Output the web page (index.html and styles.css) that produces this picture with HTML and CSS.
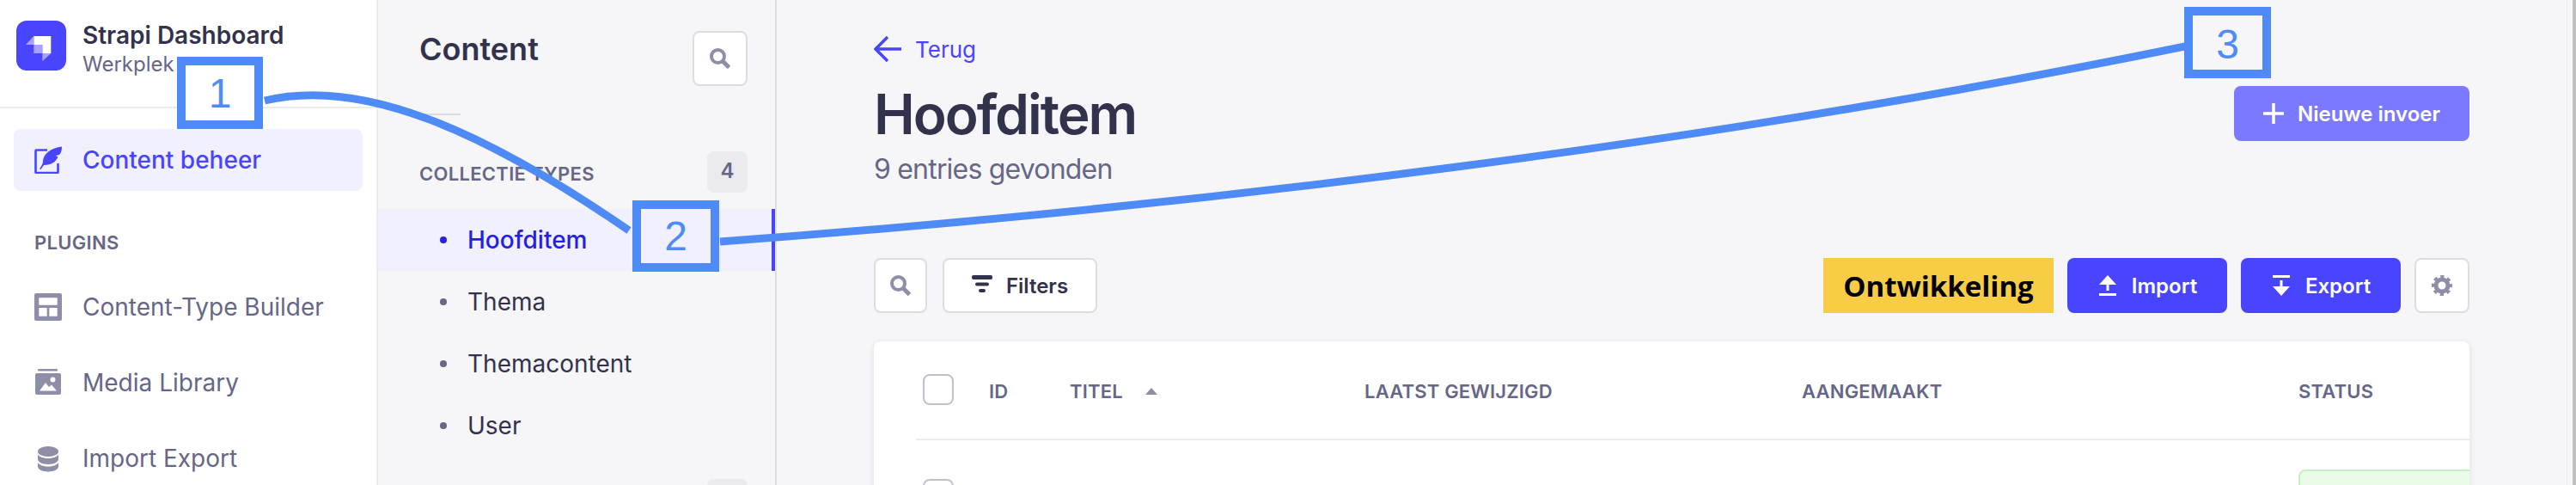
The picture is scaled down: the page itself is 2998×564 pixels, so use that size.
FILE: index.html
```html
<!DOCTYPE html>
<html lang="nl">
<head>
  <meta charset="UTF-8" />
  <title>Strapi Dashboard</title>
  <link rel="stylesheet" href="styles.css">
</head>
<body>

  <div class="app">
    <!-- Hoofdmenu links -->
    <nav class="mainnav">
      <div class="brand">
        <svg class="brand-logo" viewBox="0 0 58 58">
          <rect width="58" height="58" rx="12" fill="#4945ff" />
          <path d="M20.3 18H40.3V38H30.3V28H20.3Z" fill="#fff" />
          <path d="M20.3 28H30.3V38H20.3Z M20.3 18V28H11Z M30.3 38H40.3L30.3 47.3Z" fill="#a5a3ff" />
        </svg>
        <div>
          <div class="brand-name">Strapi Dashboard</div>
          <div class="brand-sub">Werkplek</div>
        </div>
      </div>

      <a class="nav-item active">
        <svg class="nav-icon" viewBox="0 0 32 32">
          <path d="M15 4.500H2.500a1 1 0 0 0-1 1V30a1 1 0 0 0 1 1H26.500a1 1 0 0 0 1-1V20" fill="none" stroke="#4945ff" stroke-width="2.600" />
          <path d="M6 26.500C9 22 10 20 10 17 11 8 20 2 32 .5 32 5 31 8 29 10L25 11 27.500 12.500C25 18 20 22 11 22L7.500 27Z" fill="#4945ff" />
        </svg>
        Content beheer
      </a>

      <div class="nav-label">Plugins</div>

      <a class="nav-item">
        <svg class="nav-icon" viewBox="0 0 32 32">
          <path fill-rule="evenodd" d="M2 0H30a2 2 0 0 1 2 2V30a2 2 0 0 1-2 2H2a2 2 0 0 1-2-2V2a2 2 0 0 1 2-2ZM5.300 5.300V13.700H26.700V5.300ZM5.300 17V26.700H14.700V17ZM17.300 17V26.700H26.700V17Z" fill="#8e8ea9" />
        </svg>
        Content-Type Builder
      </a>
      <a class="nav-item">
        <svg class="nav-icon" viewBox="0 0 32 32">
          <rect x="4" y="0" width="23" height="2.500" rx="1" fill="#8e8ea9" />
          <rect x="1" y="5" width="30" height="25" rx="2" fill="#8e8ea9" />
          <circle cx="21.500" cy="12.500" r="3" fill="#fff" />
          <path d="M6 25.500 13 16l4 5 3-2.500 6 7Z" fill="#fff" />
        </svg>
        Media Library
      </a>
      <a class="nav-item">
        <svg class="nav-icon" viewBox="0 0 32 32">
          <ellipse cx="16" cy="8" rx="12" ry="6" fill="#8e8ea9" />
          <path d="M4 11.500c2 3 7 4.500 12 4.500s10-1.500 12-4.500V17c0 3-5 6-12 6S4 20 4 17Z" fill="#8e8ea9" />
          <path d="M4 21c2 3 7 4.500 12 4.500S26 24 28 21v4.500c0 3-5 6-12 6s-12-3-12-6Z" fill="#8e8ea9" />
        </svg>
        Import Export
      </a>
    </nav>

    <!-- Content menu -->
    <aside class="subnav">
      <div class="subnav-head">
        <h2>Content</h2>
        <button class="icon-btn">
          <svg class="icon" viewBox="0 0 24 24"><circle cx="9.500" cy="9.500" r="7.500" fill="none" stroke="#8e8ea9" stroke-width="4" /><path d="M14.500 14.500 22.500 22.500" stroke="#8e8ea9" stroke-width="5" /></svg>
        </button>
      </div>
      <div class="subnav-rule"></div>

      <div class="subnav-section">
        <span>Collectie Types</span>
        <span class="count">4</span>
      </div>
      <ul class="subnav-list">
        <li class="active">Hoofditem</li>
        <li>Thema</li>
        <li>Themacontent</li>
        <li>User</li>
      </ul>
      <div class="subnav-section second">
        <span class="count"></span>
      </div>
    </aside>

    <!-- Lijst met invoer -->
    <main class="main">
      <a class="back">
        <svg class="back-arrow" viewBox="0 0 32 32"><path d="M32 16H3M16 2 2 16 16 30" fill="none" stroke="#4945ff" stroke-width="3.500" /></svg>
        Terug
      </a>

      <div class="page-head">
        <div>
          <h1>Hoofditem</h1>
          <p class="found">9 entries gevonden</p>
        </div>
        <button class="btn new">
          <svg class="icon plus" viewBox="0 0 24 24"><path d="M12 0V24M0 12H24" stroke="#fff" stroke-width="3.500" /></svg>
          Nieuwe invoer
        </button>
      </div>

      <div class="toolbar">
        <div class="toolbar-group">
          <button class="icon-btn small">
            <svg class="icon" viewBox="0 0 24 24"><circle cx="9.500" cy="9.500" r="7.500" fill="none" stroke="#8e8ea9" stroke-width="4" /><path d="M14.500 14.500 22.500 22.500" stroke="#8e8ea9" stroke-width="5" /></svg>
          </button>
          <button class="btn filters">
            <svg class="icon" viewBox="0 0 24 24">
              <rect x="0" y="0" width="24" height="5" rx="2" fill="#32324d" />
              <rect x="4" y="8.500" width="16" height="4" rx="2" fill="#32324d" />
              <rect x="8" y="16" width="8" height="4" rx="2" fill="#32324d" />
            </svg>
            Filters
          </button>
        </div>
        <div class="toolbar-group right">
          <span class="env">Ontwikkeling</span>
          <button class="btn primary">
            <svg class="icon" viewBox="0 0 24 24"><path d="M12 0 22 11H13.500V18H10.500V11H2ZM2 21H22V24H2Z" fill="#fff" /></svg>
            Import
          </button>
          <button class="btn primary">
            <svg class="icon" viewBox="0 0 24 24"><path d="M2 0H22V3H2ZM10.500 6H13.500V13H22L12 24 2 13H10.500Z" fill="#fff" /></svg>
            Export
          </button>
          <button class="icon-btn">
            <svg class="icon" viewBox="0 0 24 24">
              <circle cx="12" cy="12" r="7" fill="none" stroke="#8e8ea9" stroke-width="5" />
              <circle cx="12" cy="12" r="10.500" fill="none" stroke="#8e8ea9" stroke-width="3" stroke-dasharray="4.300 3.950" stroke-dashoffset="2.150" />
            </svg>
          </button>
        </div>
      </div>

      <div class="table-card">
        <div class="row head">
          <span class="check"></span>
          <span>ID</span>
          <span class="sorted">Titel <i class="sort-up"></i></span>
          <span>Laatst gewijzigd</span>
          <span>Aangemaakt</span>
          <span>Status</span>
        </div>
        <div class="row">
          <span class="check"></span>
          <span></span>
          <span></span>
          <span></span>
          <span></span>
          <span class="status"></span>
        </div>
      </div>
    </main>

    <div class="page-edge"></div>
  </div>

  <!-- Annotaties over de schermafbeelding -->
  <svg class="curves" viewBox="0 0 2998 564">
    <path d="M308 117C420 90 560 150 732 268" />
    <path d="M838 281C1400 240 2000 165 2543 54" />
  </svg>
  <div class="callout one">1</div>
  <div class="callout two">2</div>
  <div class="callout three">3</div>

</body>
</html>
```

FILE: styles.css
```css
* {
  margin: 0;
  padding: 0;
  box-sizing: border-box;
}

html, body {
  height: 564px;
  overflow: hidden;
}

body {
  position: relative;
  font-family: Inter, 'Noto Sans', sans-serif;
  background: #f6f6f9;
  color: #32324d;
}

.app {
  display: flex;
  height: 564px;
  overflow: hidden;
}

/* Hoofdmenu */
.mainnav {
  width: 440px;
  flex: none;
  background: #fff;
  border-right: 2px solid #eaeaef;
}

.brand {
  display: flex;
  gap: 19px;
  height: 126px;
  padding: 24px 0 0 19px;
  border-bottom: 2px solid #eaeaef;
}

.brand-logo {
  width: 58px;
  height: 58px;
  flex: none;
}

.brand-name {
  font-size: 28px;
  line-height: 34px;
  font-weight: 600;
}

.brand-sub {
  font-size: 24px;
  line-height: 32px;
  margin-top: 1px;
  color: #666687;
}

.nav-item {
  display: flex;
  align-items: center;
  gap: 24px;
  height: 72px;
  margin: 16px 16px 0;
  padding-left: 24px;
  border-radius: 8px;
  font-size: 28px;
  color: #666687;
}

.nav-item.active {
  margin-top: 24px;
  background: #f0f0ff;
  color: #4945ff;
  font-weight: 500;
}

.nav-icon {
  width: 32px;
  height: 32px;
  flex: none;
}

.nav-label {
  margin: 46px 0 25px 40px;
  font-size: 22px;
  line-height: 28px;
  font-weight: 600;
  letter-spacing: 0.3px;
  text-transform: uppercase;
  color: #666687;
}

/* Content menu */
.subnav {
  width: 464px;
  flex: none;
  border-right: 2px solid #dcdce4;
}

.subnav-head {
  display: flex;
  justify-content: space-between;
  padding: 36px 32px 0 48px;
}

.subnav-head h2 {
  font-size: 36px;
  line-height: 42px;
  font-weight: 600;
}

.subnav-rule {
  width: 47px;
  height: 2px;
  margin: 32px 0 0 49px;
  background: #dcdce4;
}

.subnav-section {
  display: flex;
  justify-content: space-between;
  align-items: center;
  height: 48px;
  margin-top: 42px;
  padding: 0 32px 0 48px;
  font-size: 22px;
  font-weight: 600;
  letter-spacing: 0.3px;
  text-transform: uppercase;
  color: #666687;
}

.subnav-section > span:first-child {
  padding-top: 3px;
}

.subnav-section.second {
  justify-content: flex-end;
  margin-top: 26px;
}

.count {
  width: 47px;
  height: 48px;
  border-radius: 8px;
  background: #eaeaef;
  font-size: 24px;
  line-height: 46px;
  text-align: center;
  letter-spacing: 0;
}

.subnav-list {
  list-style: none;
  margin-top: 19px;
}

.subnav-list li {
  display: flex;
  align-items: center;
  gap: 24px;
  height: 72px;
  padding-left: 72px;
  font-size: 28px;
}

.subnav-list li::before {
  content: "";
  width: 8px;
  height: 8px;
  border-radius: 50%;
  background: #666687;
}

.subnav-list li.active {
  background: #f0f0ff;
  border-right: 4px solid #4945ff;
  color: #271fe0;
  font-weight: 500;
}

.subnav-list li.active::before {
  background: #271fe0;
}

/* Pagina */
.main {
  flex: 1;
  min-width: 0;
  padding: 41px 113px 0;
}

.back {
  display: flex;
  align-items: center;
  gap: 16px;
  height: 32px;
  font-size: 26px;
  color: #4945ff;
}

.back-arrow {
  width: 32px;
  height: 32px;
}

.page-head {
  display: flex;
  justify-content: space-between;
  align-items: flex-start;
  margin-top: 20px;
}

.page-head h1 {
  font-size: 64px;
  line-height: 80px;
  font-weight: 600;
  letter-spacing: -2px;
}

.found {
  margin-top: 4px;
  font-size: 32px;
  line-height: 40px;
  letter-spacing: -0.8px;
  color: #666687;
}

.btn {
  display: flex;
  justify-content: center;
  align-items: center;
  gap: 16px;
  height: 64px;
  border: none;
  border-radius: 8px;
  font-family: inherit;
  font-size: 24px;
  font-weight: 600;
}

.btn.new {
  width: 274px;
  margin-top: 7px;
  background: #7b79ff;
  color: #fff;
}

.plus {
  width: 25px;
  height: 25px;
}

.toolbar {
  display: flex;
  justify-content: space-between;
  margin-top: 83px;
}

.toolbar-group {
  display: flex;
  gap: 18px;
}

.toolbar-group.right {
  gap: 16px;
}

.icon-btn {
  display: flex;
  justify-content: center;
  align-items: center;
  width: 64px;
  height: 64px;
  background: #fff;
  border: 2px solid #dcdce4;
  border-radius: 8px;
}

.icon-btn.small {
  width: 62px;
}

.icon {
  width: 24px;
  height: 24px;
  flex: none;
}

.btn.filters {
  width: 180px;
  background: #fff;
  border: 2px solid #dcdce4;
  color: #32324d;
}

.btn.primary {
  width: 186px;
  background: #4945ff;
  color: #fff;
}

.env {
  display: flex;
  justify-content: center;
  align-items: center;
  width: 268px;
  height: 64px;
  background: #f8cd46;
  color: #000;
  font-family: 'Open Sans', sans-serif;
  font-size: 33px;
  font-weight: 700;
}

/* Tabel */
.table-card {
  height: 300px;
  margin-top: 33px;
  padding-left: 49px;
  overflow: hidden;
  background: #fff;
  border-radius: 8px 8px 0 0;
  box-shadow: 0 2px 8px rgba(33, 33, 52, 0.1);
}

.row {
  display: grid;
  grid-template-columns: 77px 94px 343px 509px 578px 1fr;
  align-items: center;
  height: 126px;
  padding-left: 8px;
}

.row.head {
  height: 115px;
  padding-bottom: 2px;
  border-bottom: 2px solid #eaeaef;
  font-size: 22px;
  font-weight: 600;
  letter-spacing: 0.2px;
  text-transform: uppercase;
  color: #666687;
}

.row.head span:not(.check) {
  padding-top: 4px;
}

.check {
  width: 36px;
  height: 36px;
  border: 2px solid #c0c0cf;
  border-radius: 8px;
}

.sorted {
  display: flex;
  align-items: center;
  gap: 26px;
}

.sort-up {
  width: 0;
  height: 0;
  border-left: 7px solid transparent;
  border-right: 7px solid transparent;
  border-bottom: 8px solid #8e8ea9;
}

.status {
  width: 300px;
  height: 58px;
  background: #eafbe7;
  border: 2px solid #c6f0c2;
  border-radius: 8px;
}

.page-edge {
  width: 11px;
  flex: none;
  background: #f6f6f9;
  border-left: 1px solid #eaeaef;
  border-right: 4px solid #c0c0c0;
}

/* Annotaties */
.curves {
  position: absolute;
  top: 0;
  left: 0;
  width: 2998px;
  height: 564px;
  fill: none;
  stroke: #4f8bf7;
  stroke-width: 9;
}

.callout {
  position: absolute;
  display: flex;
  justify-content: center;
  align-items: center;
  border: 10px solid #4f8bf7;
  font-family: 'Liberation Sans', Arial, sans-serif;
  font-size: 48px;
  color: #4f8bf7;
}

.callout.one {
  top: 66px;
  left: 206px;
  width: 100px;
  height: 84px;
  background: #fff;
}

.callout.two {
  top: 233px;
  left: 736px;
  width: 101px;
  height: 83px;
}

.callout.three {
  top: 8px;
  left: 2542px;
  width: 101px;
  height: 83px;
  padding-top: 3px;
}
```
